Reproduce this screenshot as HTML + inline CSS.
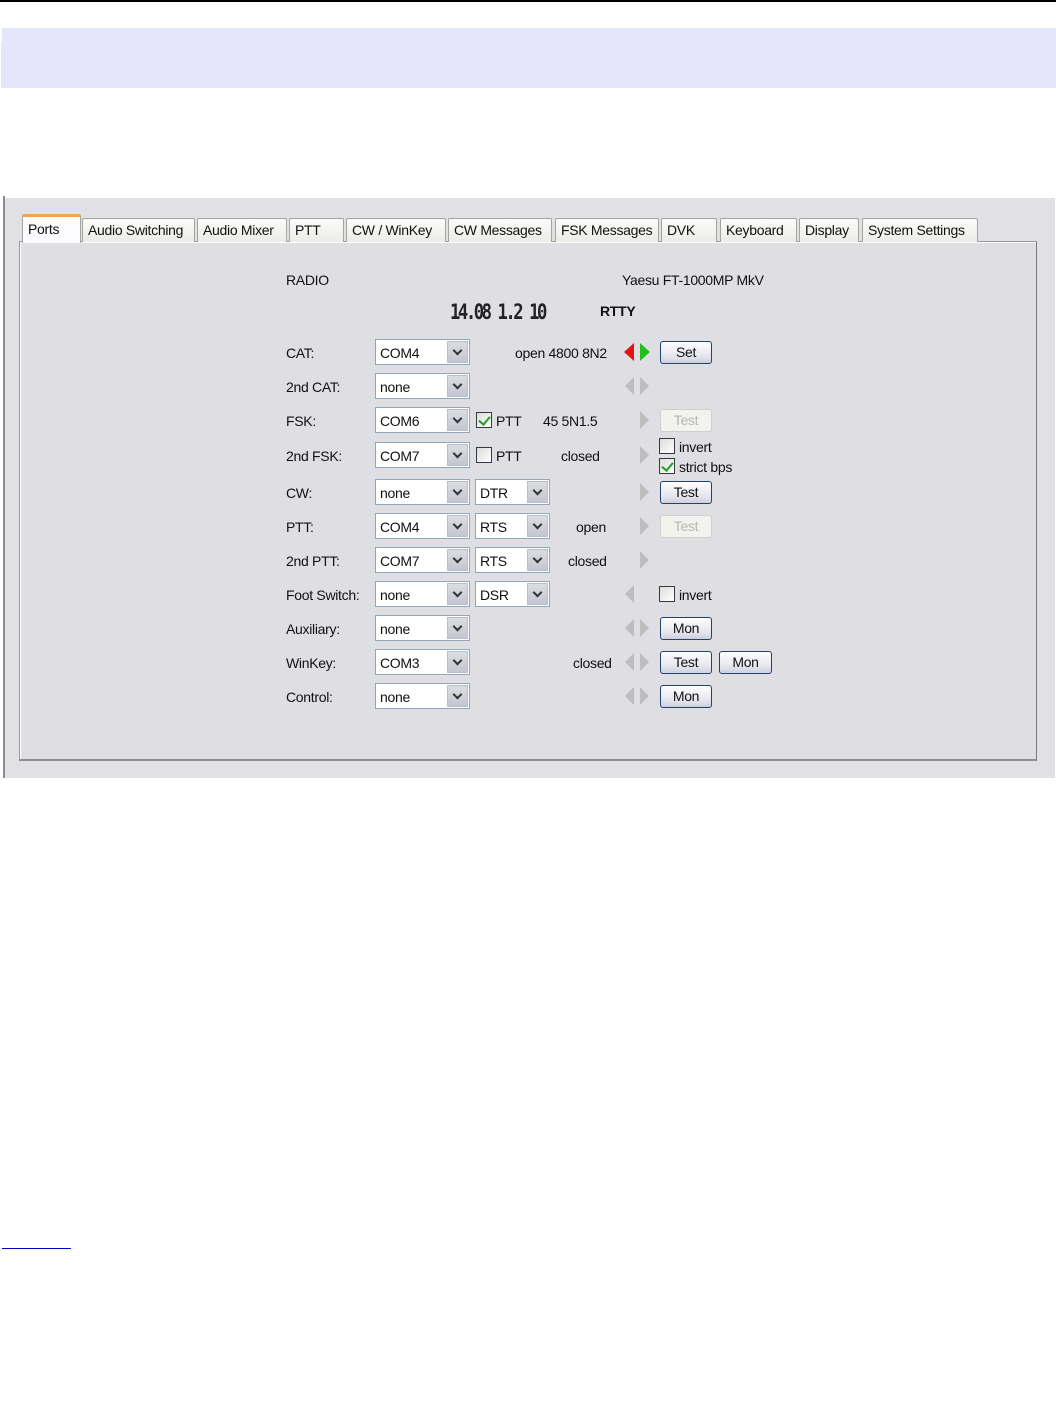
<!DOCTYPE html>
<html><head><meta charset="utf-8"><style>
*{margin:0;padding:0;box-sizing:border-box}
body{width:1056px;height:1410px;background:#fff;position:relative;overflow:hidden;font-family:"Liberation Sans",Tahoma,sans-serif;font-size:14px;color:#111}
.a{position:absolute}
.t{position:absolute;line-height:16px;white-space:nowrap;letter-spacing:-0.3px}
.tab{position:absolute;top:218px;height:24px;border:1px solid #a5a5a0;border-bottom:none;background:linear-gradient(#fbfbfa,#ecebe6);font-size:14px;padding:3px 0 0 5px;letter-spacing:-0.3px;white-space:nowrap;border-radius:2px 2px 0 0}
.cb{position:absolute;height:26px;border:1px solid #8fa6bd;background:#fff;padding:5px 0 0 4px;letter-spacing:-0.3px}
.cb i{position:absolute;right:1px;top:1px;width:21px;height:22px;background:linear-gradient(#dcdde3,#c3c6d2);border:1px solid #b8bfcc}
.cb i:after{content:"";position:absolute;left:6px;top:5px;width:5px;height:5px;border-right:2px solid #333;border-bottom:2px solid #333;transform:rotate(45deg)}
.bt{position:absolute;height:23px;border:1px solid #24426b;border-radius:3px;background:linear-gradient(#fff,#e4e4ee 70%,#cdcfdc);text-align:center;line-height:20px;letter-spacing:-0.3px}
.bt.d{border-color:#cfd0c8;color:#b8b8b0;background:#f2f2ee}
.ck{position:absolute;width:16px;height:16px;border:1px solid #333a45;background:linear-gradient(135deg,#dcdcd8,#fff)}
.ck.on:after{content:"";position:absolute;left:4px;top:1px;width:5px;height:9px;border-right:2px solid #21a121;border-bottom:2px solid #21a121;transform:rotate(40deg)}
</style></head><body>
<div class="a" style="left:0;top:0;width:1056px;height:2px;background:#000"></div>
<div class="a" style="left:1px;top:28px;width:1055px;height:60px;background:#e5e5fc"></div>
<div class="a" style="left:0;top:28px;width:2px;height:14px;background:#fff"></div>

<div class="a" style="left:3px;top:196px;width:2px;height:582px;background:#8a8a90"></div>
<div class="a" style="left:5px;top:198px;width:1050px;height:580px;background:#e1e0e4"></div>
<div class="a" style="left:19px;top:241px;width:1018px;height:520px;border:1px solid #919b9c;border-right-color:#7a7a7a;border-bottom:2px solid #8c8c8c;background:#dfdee2;box-shadow:inset 1px 1px 0 #fff"></div>

<div class="tab" style="left:22px;top:214px;width:59px;height:29px;background:#fcfcfe;border-top:3px solid #f5a44a;padding-top:4px;z-index:2">Ports</div>
<div class="tab" style="left:82px;width:113px">Audio Switching</div>
<div class="tab" style="left:197px;width:90px">Audio Mixer</div>
<div class="tab" style="left:289px;width:55px">PTT</div>
<div class="tab" style="left:346px;width:100px">CW / WinKey</div>
<div class="tab" style="left:448px;width:104px">CW Messages</div>
<div class="tab" style="left:555px;width:104px">FSK Messages</div>
<div class="tab" style="left:661px;width:56px">DVK</div>
<div class="tab" style="left:720px;width:77px">Keyboard</div>
<div class="tab" style="left:799px;width:60px">Display</div>
<div class="tab" style="left:862px;width:116px">System Settings</div>

<div class="t" style="left:286px;top:272px">RADIO</div>
<div class="t" style="left:622px;top:272px">Yaesu FT-1000MP MkV</div>
<div class="t" style="left:450px;top:301px;font-family:'DejaVu Sans Mono',monospace;font-weight:bold;font-size:21px;line-height:22px;letter-spacing:-3px;transform:scaleX(0.82);transform-origin:left;color:#222">14.08 1.2 10</div>
<div class="t" style="left:600px;top:303px;font-weight:bold;font-size:14px">RTTY</div>

<div class="t" style="left:286px;top:345px">CAT:</div>
<div class="t" style="left:286px;top:379px">2nd CAT:</div>
<div class="t" style="left:286px;top:413px">FSK:</div>
<div class="t" style="left:286px;top:448px">2nd FSK:</div>
<div class="t" style="left:286px;top:485px">CW:</div>
<div class="t" style="left:286px;top:519px">PTT:</div>
<div class="t" style="left:286px;top:553px">2nd PTT:</div>
<div class="t" style="left:286px;top:587px">Foot Switch:</div>
<div class="t" style="left:286px;top:621px">Auxiliary:</div>
<div class="t" style="left:286px;top:655px">WinKey:</div>
<div class="t" style="left:286px;top:689px">Control:</div>

<div class="cb" style="left:375px;top:339px;width:95px">COM4<i></i></div>
<div class="cb" style="left:375px;top:373px;width:95px">none<i></i></div>
<div class="cb" style="left:375px;top:407px;width:95px">COM6<i></i></div>
<div class="cb" style="left:375px;top:442px;width:95px">COM7<i></i></div>
<div class="cb" style="left:375px;top:479px;width:95px">none<i></i></div>
<div class="cb" style="left:375px;top:513px;width:95px">COM4<i></i></div>
<div class="cb" style="left:375px;top:547px;width:95px">COM7<i></i></div>
<div class="cb" style="left:375px;top:581px;width:95px">none<i></i></div>
<div class="cb" style="left:375px;top:615px;width:95px">none<i></i></div>
<div class="cb" style="left:375px;top:649px;width:95px">COM3<i></i></div>
<div class="cb" style="left:375px;top:683px;width:95px">none<i></i></div>

<div class="cb" style="left:475px;top:479px;width:75px">DTR<i></i></div>
<div class="cb" style="left:475px;top:513px;width:75px">RTS<i></i></div>
<div class="cb" style="left:475px;top:547px;width:75px">RTS<i></i></div>
<div class="cb" style="left:475px;top:581px;width:75px">DSR<i></i></div>

<div class="ck on" style="left:476px;top:412px"></div><div class="t" style="left:496px;top:413px">PTT</div>
<div class="ck" style="left:476px;top:447px"></div><div class="t" style="left:496px;top:448px">PTT</div>
<div class="t" style="left:515px;top:345px">open 4800 8N2</div>
<div class="t" style="left:543px;top:413px">45 5N1.5</div>
<div class="t" style="left:561px;top:448px">closed</div>
<div class="t" style="left:576px;top:519px">open</div>
<div class="t" style="left:568px;top:553px">closed</div>
<div class="t" style="left:573px;top:655px">closed</div>

<svg class="a" style="left:620px;top:340px" width="36" height="370" viewBox="0 0 36 370">
<g><path d="M14 3 L4 12 L14 21Z" fill="#e01616"/><path d="M20 3 L30 12 L20 21Z" fill="#1fbf1f"/></g>
<g fill="#bdbdbd"><path d="M14 37 L5 46 L14 55Z"/><path d="M20 37 L29 46 L20 55Z"/>
<path d="M20 71 L29 80 L20 89Z"/><path d="M20 106 L29 115 L20 124Z"/><path d="M20 143 L29 152 L20 161Z"/>
<path d="M20 177 L29 186 L20 195Z"/><path d="M20 211 L29 220 L20 229Z"/><path d="M14 245 L5 254 L14 263Z"/>
<path d="M14 279 L5 288 L14 297Z"/><path d="M20 279 L29 288 L20 297Z"/>
<path d="M14 313 L5 322 L14 331Z"/><path d="M20 313 L29 322 L20 331Z"/>
<path d="M14 347 L5 356 L14 365Z"/><path d="M20 347 L29 356 L20 365Z"/></g>
</svg>

<div class="bt" style="left:660px;top:341px;width:52px">Set</div>
<div class="bt d" style="left:660px;top:409px;width:52px">Test</div>
<div class="ck" style="left:659px;top:438px"></div><div class="t" style="left:679px;top:439px">invert</div>
<div class="ck on" style="left:659px;top:458px"></div><div class="t" style="left:679px;top:459px">strict bps</div>
<div class="bt" style="left:660px;top:481px;width:52px">Test</div>
<div class="bt d" style="left:660px;top:515px;width:52px">Test</div>
<div class="ck" style="left:659px;top:586px"></div><div class="t" style="left:679px;top:587px">invert</div>
<div class="bt" style="left:660px;top:617px;width:52px">Mon</div>
<div class="bt" style="left:660px;top:651px;width:52px">Test</div>
<div class="bt" style="left:719px;top:651px;width:53px">Mon</div>
<div class="bt" style="left:660px;top:685px;width:52px">Mon</div>

<div class="a" style="left:2px;top:1248px;width:69px;height:1px;background:#0000c0"></div>
</body></html>
